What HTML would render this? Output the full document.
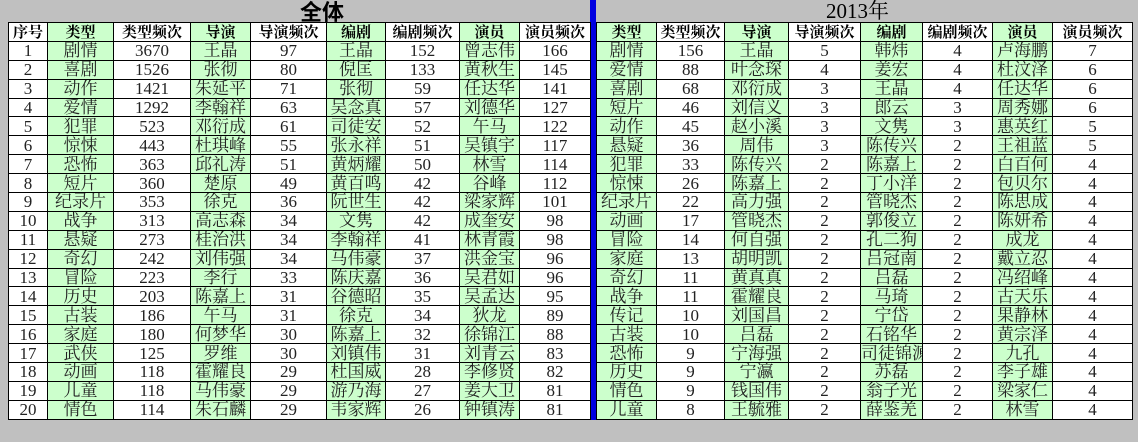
<!DOCTYPE html>
<html><head><meta charset="utf-8"><style>
body{margin:0;width:1138px;height:442px;background:#c0c0c0;position:relative;overflow:hidden;font-family:"Liberation Serif","Noto Serif CJK SC","Noto Sans CJK SC",serif;}
.t{position:absolute;top:22px;border-collapse:collapse;table-layout:fixed;background:#fff;}
.t td{border:1px solid #000;height:17.9px;padding:0;text-align:center;font-size:17px;line-height:17px;color:#222;white-space:nowrap;overflow:hidden;}
.t tr:first-child td{font-weight:bold;font-size:15px;color:#000;font-family:"Noto Serif CJK SC",serif;}
.L td:nth-child(2),.L td:nth-child(4),.L td:nth-child(6),.L td:nth-child(8){background:#ccffcc;}
.R td:nth-child(1),.R td:nth-child(3),.R td:nth-child(5),.R td:nth-child(7){background:#ccffcc;}
.h{position:absolute;top:-1px;font-size:22px;line-height:24px;font-weight:bold;font-family:"Noto Sans CJK SC",sans-serif;color:#000}
#bar{position:absolute;left:590px;top:0;width:6px;height:420px;background:#0000e0;}
</style></head><body>
<div class="h" style="left:300px">全体</div>
<div class="h" style="left:826px;font-weight:normal;font-size:21px;font-family:'Liberation Serif','Noto Serif CJK SC',serif">2013年</div>
<div id="bar"></div>
<table class="t L" style="left:8px;width:582px">
<colgroup><col style="width:39px"><col style="width:66px"><col style="width:77px"><col style="width:60px"><col style="width:76px"><col style="width:59px"><col style="width:74px"><col style="width:60px"><col style="width:71px"></colgroup>
<tr><td>序号</td><td>类型</td><td>类型频次</td><td>导演</td><td>导演频次</td><td>编剧</td><td>编剧频次</td><td>演员</td><td>演员频次</td></tr>
<tr><td>1</td><td>剧情</td><td>3670</td><td>王晶</td><td>97</td><td>王晶</td><td>152</td><td>曾志伟</td><td>166</td></tr>
<tr><td>2</td><td>喜剧</td><td>1526</td><td>张彻</td><td>80</td><td>倪匡</td><td>133</td><td>黄秋生</td><td>145</td></tr>
<tr><td>3</td><td>动作</td><td>1421</td><td>朱延平</td><td>71</td><td>张彻</td><td>59</td><td>任达华</td><td>141</td></tr>
<tr><td>4</td><td>爱情</td><td>1292</td><td>李翰祥</td><td>63</td><td>吴念真</td><td>57</td><td>刘德华</td><td>127</td></tr>
<tr><td>5</td><td>犯罪</td><td>523</td><td>邓衍成</td><td>61</td><td>司徒安</td><td>52</td><td>午马</td><td>122</td></tr>
<tr><td>6</td><td>惊悚</td><td>443</td><td>杜琪峰</td><td>55</td><td>张永祥</td><td>51</td><td>吴镇宇</td><td>117</td></tr>
<tr><td>7</td><td>恐怖</td><td>363</td><td>邱礼涛</td><td>51</td><td>黄炳耀</td><td>50</td><td>林雪</td><td>114</td></tr>
<tr><td>8</td><td>短片</td><td>360</td><td>楚原</td><td>49</td><td>黄百鸣</td><td>42</td><td>谷峰</td><td>112</td></tr>
<tr><td>9</td><td>纪录片</td><td>353</td><td>徐克</td><td>36</td><td>阮世生</td><td>42</td><td>梁家辉</td><td>101</td></tr>
<tr><td>10</td><td>战争</td><td>313</td><td>高志森</td><td>34</td><td>文隽</td><td>42</td><td>成奎安</td><td>98</td></tr>
<tr><td>11</td><td>悬疑</td><td>273</td><td>桂治洪</td><td>34</td><td>李翰祥</td><td>41</td><td>林青霞</td><td>98</td></tr>
<tr><td>12</td><td>奇幻</td><td>242</td><td>刘伟强</td><td>34</td><td>马伟豪</td><td>37</td><td>洪金宝</td><td>96</td></tr>
<tr><td>13</td><td>冒险</td><td>223</td><td>李行</td><td>33</td><td>陈庆嘉</td><td>36</td><td>吴君如</td><td>96</td></tr>
<tr><td>14</td><td>历史</td><td>203</td><td>陈嘉上</td><td>31</td><td>谷德昭</td><td>35</td><td>吴孟达</td><td>95</td></tr>
<tr><td>15</td><td>古装</td><td>186</td><td>午马</td><td>31</td><td>徐克</td><td>34</td><td>狄龙</td><td>89</td></tr>
<tr><td>16</td><td>家庭</td><td>180</td><td>何梦华</td><td>30</td><td>陈嘉上</td><td>32</td><td>徐锦江</td><td>88</td></tr>
<tr><td>17</td><td>武侠</td><td>125</td><td>罗维</td><td>30</td><td>刘镇伟</td><td>31</td><td>刘青云</td><td>83</td></tr>
<tr><td>18</td><td>动画</td><td>118</td><td>霍耀良</td><td>29</td><td>杜国威</td><td>28</td><td>李修贤</td><td>82</td></tr>
<tr><td>19</td><td>儿童</td><td>118</td><td>马伟豪</td><td>29</td><td>游乃海</td><td>27</td><td>姜大卫</td><td>81</td></tr>
<tr><td>20</td><td>情色</td><td>114</td><td>朱石麟</td><td>29</td><td>韦家辉</td><td>26</td><td>钟镇涛</td><td>81</td></tr>
</table>
<table class="t R" style="left:596px;width:536px">
<colgroup><col style="width:60px"><col style="width:68px"><col style="width:64px"><col style="width:72px"><col style="width:62px"><col style="width:70px"><col style="width:60px"><col style="width:80px"></colgroup>
<tr><td>类型</td><td>类型频次</td><td>导演</td><td>导演频次</td><td>编剧</td><td>编剧频次</td><td>演员</td><td>演员频次</td></tr>
<tr><td>剧情</td><td>156</td><td>王晶</td><td>5</td><td>韩炜</td><td>4</td><td>卢海鹏</td><td>7</td></tr>
<tr><td>爱情</td><td>88</td><td>叶念琛</td><td>4</td><td>姜宏</td><td>4</td><td>杜汶泽</td><td>6</td></tr>
<tr><td>喜剧</td><td>68</td><td>邓衍成</td><td>3</td><td>王晶</td><td>4</td><td>任达华</td><td>6</td></tr>
<tr><td>短片</td><td>46</td><td>刘信义</td><td>3</td><td>郎云</td><td>3</td><td>周秀娜</td><td>6</td></tr>
<tr><td>动作</td><td>45</td><td>赵小溪</td><td>3</td><td>文隽</td><td>3</td><td>惠英红</td><td>5</td></tr>
<tr><td>悬疑</td><td>36</td><td>周伟</td><td>3</td><td>陈传兴</td><td>2</td><td>王祖蓝</td><td>5</td></tr>
<tr><td>犯罪</td><td>33</td><td>陈传兴</td><td>2</td><td>陈嘉上</td><td>2</td><td>白百何</td><td>4</td></tr>
<tr><td>惊悚</td><td>26</td><td>陈嘉上</td><td>2</td><td>丁小洋</td><td>2</td><td>包贝尔</td><td>4</td></tr>
<tr><td>纪录片</td><td>22</td><td>高力强</td><td>2</td><td>管晓杰</td><td>2</td><td>陈思成</td><td>4</td></tr>
<tr><td>动画</td><td>17</td><td>管晓杰</td><td>2</td><td>郭俊立</td><td>2</td><td>陈妍希</td><td>4</td></tr>
<tr><td>冒险</td><td>14</td><td>何自强</td><td>2</td><td>孔二狗</td><td>2</td><td>成龙</td><td>4</td></tr>
<tr><td>家庭</td><td>13</td><td>胡明凯</td><td>2</td><td>吕冠南</td><td>2</td><td>戴立忍</td><td>4</td></tr>
<tr><td>奇幻</td><td>11</td><td>黄真真</td><td>2</td><td>吕磊</td><td>2</td><td>冯绍峰</td><td>4</td></tr>
<tr><td>战争</td><td>11</td><td>霍耀良</td><td>2</td><td>马琦</td><td>2</td><td>古天乐</td><td>4</td></tr>
<tr><td>传记</td><td>10</td><td>刘国昌</td><td>2</td><td>宁岱</td><td>2</td><td>果静林</td><td>4</td></tr>
<tr><td>古装</td><td>10</td><td>吕磊</td><td>2</td><td>石铭华</td><td>2</td><td>黄宗泽</td><td>4</td></tr>
<tr><td>恐怖</td><td>9</td><td>宁海强</td><td>2</td><td>司徒锦源</td><td>2</td><td>九孔</td><td>4</td></tr>
<tr><td>历史</td><td>9</td><td>宁瀛</td><td>2</td><td>苏磊</td><td>2</td><td>李子雄</td><td>4</td></tr>
<tr><td>情色</td><td>9</td><td>钱国伟</td><td>2</td><td>翁子光</td><td>2</td><td>梁家仁</td><td>4</td></tr>
<tr><td>儿童</td><td>8</td><td>王毓雅</td><td>2</td><td>薛鉴羌</td><td>2</td><td>林雪</td><td>4</td></tr>
</table>
</body></html>
